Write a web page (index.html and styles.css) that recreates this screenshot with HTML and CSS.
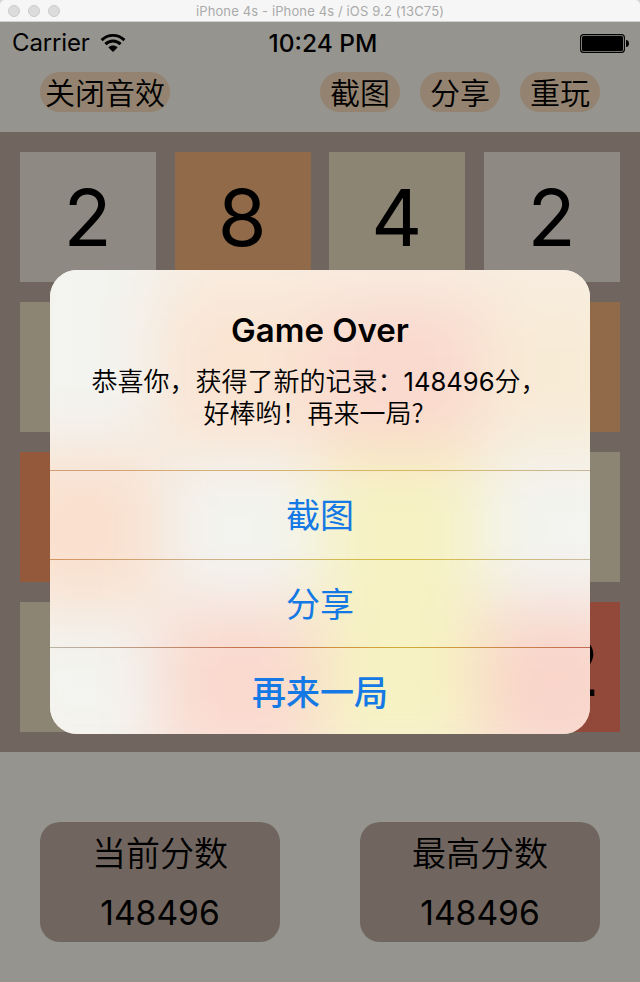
FILE: index.html
```html
<!DOCTYPE html>
<html lang="zh-CN">
<head>
<meta charset="utf-8">
<title>2048</title>
<link rel="stylesheet" href="styles.css">
</head>
<body>
<header class="titlebar">
  <div class="lights"><i></i><i></i><i></i></div>
  <span class="window-title">iPhone 4s - iPhone 4s / iOS 9.2 (13C75)</span>
</header>
<main class="screen">
  <div class="status">
    <div class="carrier"><span>Carrier</span>
      <svg class="wifi" width="26" height="20" viewBox="0 0 26 20"><g fill="none" stroke="#000" stroke-width="2.9"><path d="M1.6 7.1C8 .8 18 .8 24.4 7.1"/><path d="M5.4 11.1c4.4-4.2 10.8-4.2 15.2 0"/></g><path d="M8.4 14.4c2.8-2.5 6.4-2.5 9.2 0L13 19z"/></svg>
    </div>
    <time class="time">10:24 PM</time>
    <svg class="battery" width="49" height="19" viewBox="0 0 49 19"><rect x=".6" y=".6" width="43.8" height="17.8" rx="3" fill="none" stroke="#000" stroke-width="1.1"/><rect x="2" y="2" width="41" height="15" rx="1.5"/><path d="M46 6c4 0 4 7 0 7z"/></svg>
  </div>
  <nav class="toolbar">
    <button class="pill pill-wide">关闭音效</button>
    <button class="pill">截图</button>
    <button class="pill">分享</button>
    <button class="pill">重玩</button>
  </nav>
  <section class="board">
    <div class="tile t2">2</div><div class="tile t8">8</div><div class="tile t4">4</div><div class="tile t2">2</div>
    <div class="tile t4"></div><div class="tile t8"></div><div class="tile t32"></div><div class="tile t8"></div>
    <div class="tile t16">16</div><div class="tile t2"></div><div class="tile t4"></div><div class="tile t4"></div>
    <div class="tile t4"></div><div class="tile t32"></div><div class="tile t4"></div><div class="tile t32">32</div>
  </section>
  <footer class="scores">
    <div class="score"><span class="label">当前分数</span><span class="value">148496</span></div>
    <div class="score"><span class="label">最高分数</span><span class="value">148496</span></div>
  </footer>
</main>
<div class="alert" role="alertdialog">
  <div class="frost">
    <i class="white"></i><i class="cream"></i><i class="cream"></i><i class="cream"></i>
    <i class="white"></i><i class="peach"></i><i class="rose"></i><i class="sand"></i>
    <i class="orange"></i><i class="white"></i><i class="yellow"></i><i class="white"></i>
    <i class="white"></i><i class="rose"></i><i class="yellow"></i><i class="red"></i>
  </div>
  <div class="alert-body">
    <div class="alert-head">
      <h1>Game Over</h1>
      <p><span class="first">恭喜你，获得了新的记录：<span class="num">148496</span>分，</span><span class="second">好棒哟！再来一局?</span></p>
    </div>
    <button class="action line-a">截图</button>
    <button class="action line-b">分享</button>
    <button class="action line-c strong">再来一局</button>
  </div>
</div>
</body>
</html>
```
FILE: styles.css
```css
* { box-sizing: border-box; }
body {
  margin: 0;
  width: 640px;
  height: 982px;
  position: relative;
  overflow: hidden;
  background: #d5d5d5;
  color: #000;
  font-family: Inter, "Noto Sans CJK SC", sans-serif;
}
button { border: 0; padding: 0; margin: 0; background: none; font: inherit; color: inherit; }

.titlebar {
  height: 22px;
  display: grid;
  grid-template-columns: 60px 1fr 60px;
  align-items: center;
  background: #f6f6f6;
  border-bottom: 1px solid #d2d2d2;
  border-radius: 5px 5px 0 0;
}
.lights { display: flex; gap: 8px; padding-left: 8px; }
.lights i { width: 12px; height: 12px; border-radius: 50%; background: #dcdcdc; border: 1px solid #cbcbcb; }
.window-title { text-align: center; font-size: 13px; letter-spacing: .13px; line-height: 22px; color: #aaa; white-space: nowrap; }

.screen { height: 960px; background: #95948e; }
.status {
  height: 40px;
  padding: 2px 11px 0 12px;
  display: grid;
  grid-template-columns: 1fr auto 1fr;
  align-items: center;
  font-size: 24px;
  line-height: 38px;
}
.carrier { display: flex; align-items: center; gap: 10px; letter-spacing: -.15px; }
.time { font-weight: 550; font-size: 24.5px; padding-left: 5px; }
.battery { justify-self: end; }

.toolbar { height: 70px; padding: 10px 40px 0; display: flex; gap: 20px; align-items: flex-start; }
.pill {
  width: 80px;
  height: 40px;
  border-radius: 20px;
  background: #938370;
  font-family: "Noto Sans CJK SC DemiLight", "Noto Sans CJK SC", sans-serif;
  font-weight: 350;
  font-size: 30px;
  line-height: 38px;
  padding-bottom: 2px;
  white-space: nowrap;
}
.pill-wide { width: 130px; margin-right: auto; }

.board {
  height: 620px;
  padding: 20px;
  background: #70665f;
  display: grid;
  grid-template-columns: repeat(4, 136px);
  grid-auto-rows: 130px;
  justify-content: space-between;
  row-gap: 20px;
}
.tile { font-size: 79px; line-height: 130px; text-align: center; text-indent: -1px; }
.t2 { background: #8e8982; }
.t4 { background: #8c8574; }
.t8 { background: #906a49; }
.t16 { background: #93593a; }
.t32 { background: #934939; }

.scores { padding: 70px 40px 0; display: flex; justify-content: space-between; }
.score {
  width: 240px;
  height: 120px;
  border-radius: 20px;
  background: #70665f;
  display: flex;
  flex-direction: column;
  text-align: center;
}
.score span { height: 60px; line-height: 60px; font-size: 34px; }
.score .label { font-family: "Noto Sans CJK SC DemiLight", "Noto Sans CJK SC", sans-serif; font-weight: 350; line-height: 59px; }
.score .value { font-size: 33.6px; line-height: 61px; }

.alert {
  position: absolute;
  left: 50px;
  top: 270px;
  width: 540px;
  height: 464px;
  border-radius: 27px;
  overflow: hidden;
  text-align: center;
  background: #f7efe6;
}
/* Blurred board colours showing through the panel */
.frost {
  position: absolute;
  left: -50px;
  top: -128px;
  width: 640px;
  height: 620px;
  display: grid;
  grid-template-columns: repeat(4, 1fr);
  grid-template-rows: repeat(4, 1fr);
  filter: blur(32px);
}
.white { background: #f3f3ef; }
.cream { background: #f8eee2; }
.peach { background: #fae4d2; }
.rose { background: #fad9ce; }
.sand { background: #f8ebd6; }
.orange { background: #fae0ce; }
.yellow { background: #f6f2c3; }
.red { background: #f9d5ca; }

.alert-body { position: relative; }
.alert-head { height: 200px; padding-top: 40px; }
.alert h1 { margin: 0; font-size: 33px; font-weight: 600; line-height: 40px; }
.alert p {
  margin: 14px 0 0;
  font-family: "Noto Sans CJK SC DemiLight", "Noto Sans CJK SC", sans-serif;
  font-weight: 350;
  font-size: 26px;
  line-height: 32px;
}
.alert .num { font-family: Inter, sans-serif; font-weight: 400; font-size: 25.6px; line-height: 1; }
.first, .second { display: block; height: 32px; }
.first { padding-right: 2px; }
.second { padding-right: 13px; }
.action {
  display: block;
  width: 100%;
  height: 88px;
  background-size: 100% 1px;
  background-repeat: no-repeat;
  font-family: "Noto Sans CJK SC", sans-serif;
  font-size: 34px;
  line-height: 86px;
  padding-bottom: 1px;
  color: #1479e4;
}
.line-a { height: 89px; background-image: linear-gradient(90deg, #d29a70, #d5b17c 30%, #d7b760 65%, #c8b79d); }
.line-b { background-image: linear-gradient(90deg, #d7935a, #cfb08a 30%, #d6bd38 65%, #cabba0); }
.line-c { background-image: linear-gradient(90deg, #bab5a5, #c7704a 37%, #d4ac35 65%, #c46a55); }
.strong { font-weight: 500; }
```
